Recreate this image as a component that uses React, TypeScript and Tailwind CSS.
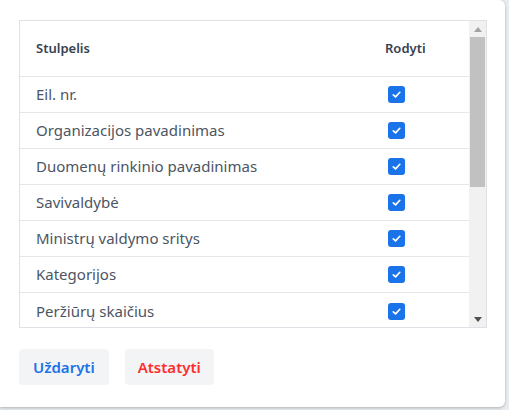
import React from "react";

const rows = [
  "Eil. nr.",
  "Organizacijos pavadinimas",
  "Duomenų rinkinio pavadinimas",
  "Savivaldybė",
  "Ministrų valdymo sritys",
  "Kategorijos",
  "Peržiūrų skaičius",
];

function Check() {
  return (
    <span className="ml-[3px] flex h-[17px] w-[17px] items-center justify-center rounded-[3px] bg-[#1a73e8]">
      <svg width="11" height="11" viewBox="0 0 12 12" fill="none">
        <path d="M2.5 6.3 L5 8.6 L9.6 3.6" stroke="white" strokeWidth="1.8" strokeLinecap="round" strokeLinejoin="round" />
      </svg>
    </span>
  );
}

export default function App() {
  return (
    <div className="h-[410px] w-[509px] overflow-hidden bg-[#e9ecef]" style={{ fontFamily: '"Segoe UI", "Noto Sans", "Open Sans", sans-serif' }}>
      <div className="h-[407px] w-[505px] rounded-r-md bg-white px-[19px] pt-[20px] shadow-[0_1px_3px_rgba(0,0,0,0.25)]">
        <div className="flex h-[308px] w-[468px] overflow-hidden border border-[#dee2e6]">
          <div className="w-[449px] overflow-hidden">
            <div className="flex h-[56px] items-center border-b border-[#e5e7eb] text-[13px] font-semibold text-[#374151]">
              <div className="w-[349px] pl-4">Stulpelis</div>
              <div className="pl-4">Rodyti</div>
            </div>
            {rows.map((r, i) => (
              <div key={r} className={`flex h-[36px] items-center text-[15px] text-[#4b5563] ${i < rows.length - 1 ? "border-b border-[#e5e7eb]" : ""}`}>
                <div className="w-[349px] whitespace-nowrap pl-4">{r}</div>
                <div className="pl-[16px]">
                  <Check />
                </div>
              </div>
            ))}
          </div>
          <div className="flex w-[17px] flex-col items-center bg-[#f1f1f1]">
            <div className="flex h-[16px] w-full items-center justify-center">
              <svg width="8" height="5" viewBox="0 0 8 5"><path d="M0 5 L4 0 L8 5 Z" fill="#a3a3a3" /></svg>
            </div>
            <div className="h-[150px] w-[15px] bg-[#c1c1c1]" />
            <div className="flex-1" />
            <div className="flex h-[16px] w-full items-center justify-center">
              <svg width="8" height="5" viewBox="0 0 8 5"><path d="M0 0 L4 5 L8 0 Z" fill="#505050" /></svg>
            </div>
          </div>
        </div>
        <div className="mt-[21px] flex gap-4">
          <button className="h-[36px] whitespace-nowrap rounded-[4px] bg-[#f3f4f6] px-[14px] text-[15px] leading-[36px] font-semibold text-[#1a73e8]">Uždaryti</button>
          <button className="h-[36px] whitespace-nowrap rounded-[4px] bg-[#f3f4f6] px-[13px] text-[15px] leading-[36px] font-semibold text-[#ff2d2d]">Atstatyti</button>
        </div>
      </div>
    </div>
  );
}
